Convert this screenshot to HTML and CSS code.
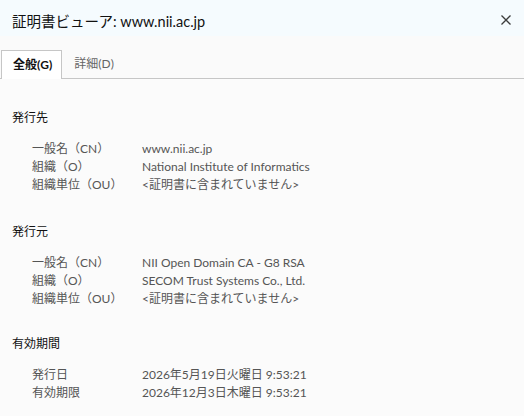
FILE: index.html
```html
<!DOCTYPE html>
<html lang="ja">
<head>
<meta charset="utf-8">
<link rel="stylesheet" href="styles.css">
</head>
<body>
<div class="dialog">
  <div class="titlebar">
    <span class="title">証明書ビューア: www.nii.ac.jp</span>
    <span class="close" aria-label="閉じる">
      <svg width="10" height="10" viewBox="0 0 10 10"><path d="M0.5 0.5 L9.5 9.5 M9.5 0.5 L0.5 9.5" stroke="#3c3c3c" stroke-width="1.3" fill="none"/></svg>
    </span>
  </div>
  <div class="tabs">
    <div class="tab active">全般(G)</div>
    <div class="tab">詳細(D)</div>
  </div>
  <div class="content">
    <section class="section first">
      <h2 class="heading">発行先</h2>
      <div class="rows">
        <div class="label">一般名（CN）</div><div class="value">www.nii.ac.jp</div>
        <div class="label">組織（O）</div><div class="value">National Institute of Informatics</div>
        <div class="label">組織単位（OU）</div><div class="value">&lt;証明書に含まれていません&gt;</div>
      </div>
    </section>
    <section class="section">
      <h2 class="heading">発行元</h2>
      <div class="rows">
        <div class="label">一般名（CN）</div><div class="value">NII Open Domain CA - G8 RSA</div>
        <div class="label">組織（O）</div><div class="value">SECOM Trust Systems Co., Ltd.</div>
        <div class="label">組織単位（OU）</div><div class="value">&lt;証明書に含まれていません&gt;</div>
      </div>
    </section>
    <section class="section last">
      <h2 class="heading">有効期間</h2>
      <div class="rows">
        <div class="label">発行日</div><div class="value">2026年5月19日火曜日 9:53:21</div>
        <div class="label">有効期限</div><div class="value">2026年12月3日木曜日 9:53:21</div>
      </div>
    </section>
  </div>
</div>
</body>
</html>
```
FILE: styles.css
```css
html, body {
  margin: 0;
  padding: 0;
  background: #fbfbfb;
}
body {
  font-family: Lato, "Noto Sans CJK JP", sans-serif;
  color: #555;
  width: 524px;
  height: 416px;
  overflow: hidden;
}
.titlebar {
  height: 36px;
  background: #f5fbfe;
  display: flex;
  align-items: center;
  justify-content: space-between;
  padding: 4px 13px 0 12px;
  box-sizing: border-box;
}
.title {
  font-size: 14.5px;
  color: #111;
}
.close {
  display: flex;
  width: 10px;
  height: 10px;
}
.tabs {
  display: flex;
  padding: 14px 0 0 1px;
  height: 28px;
  border-bottom: 1px solid #c6c6c6;
  background: #fafafa;
}
.tab {
  font-size: 12px;
  height: 28px;
  line-height: 27px;
  padding: 0 12px;
  color: #666;
  box-sizing: border-box;
}
.tab.active {
  color: #111;
  font-weight: bold;
  background: #ffffff;
  border: 1px solid #c6c6c6;
  border-bottom: none;
  height: 29px;
  padding: 0 9px 0 11px;
}
.content {
  padding: 0 12px;
}
.section {
  margin-top: 29px;
}
.section.first {
  margin-top: 30px;
}
.section.last {
  margin-top: 27px;
}
.heading {
  margin: 0;
  font-size: 12px;
  font-weight: normal;
  color: #111;
  line-height: 18px;
}
.rows {
  display: grid;
  grid-template-columns: 110px auto;
  margin: 13px 0 0 20px;
  font-size: 12px;
  line-height: 18px;
}
.label, .value {
  color: #555;
}
```
